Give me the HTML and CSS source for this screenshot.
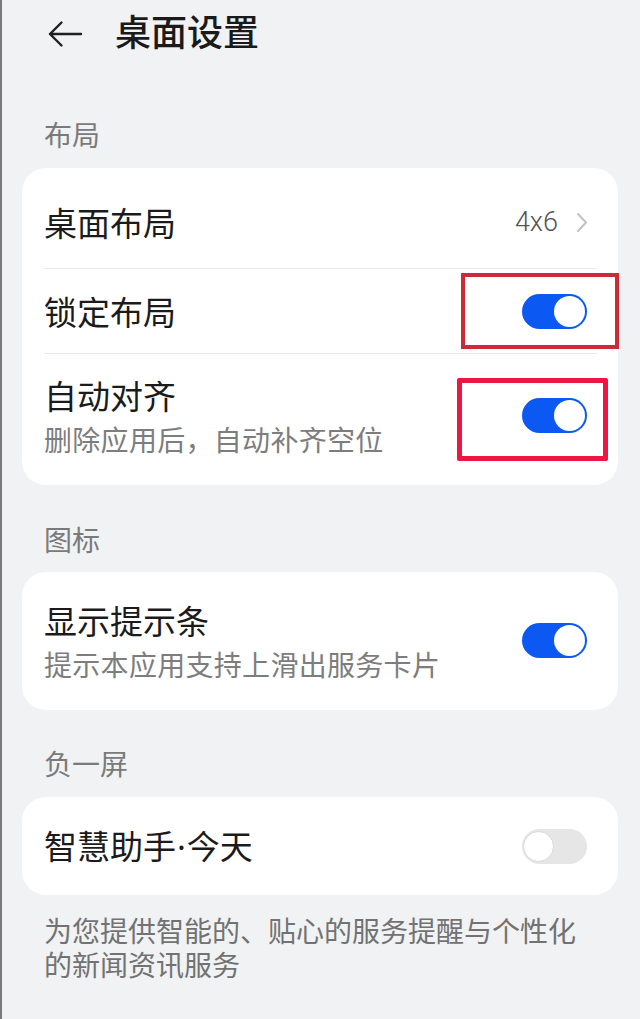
FILE: index.html
```html
<!DOCTYPE html>
<html lang="zh-CN">
<head>
<meta charset="utf-8">
<title>桌面设置</title>
<link rel="stylesheet" href="styles.css">
</head>
<body>
<div class="page">
  <header class="header">
    <svg class="back" width="36" height="28" viewBox="0 0 36 28" aria-hidden="true">
      <path d="M34 14H3M14.5 2.5L3 14l11.5 11.5" fill="none" stroke="#1f1f1f" stroke-width="2.4" stroke-linecap="round" stroke-linejoin="round"/>
    </svg>
    <h1 class="title">桌面设置</h1>
  </header>

  <div class="section-label label-first">布局</div>
  <div class="card">
    <div class="row row-first">
      <span class="row-title">桌面布局</span>
      <span class="value">4x6</span>
      <svg class="chevron" width="12" height="21" viewBox="0 0 12 21" aria-hidden="true">
        <path d="M2 2l8 8.5L2 19" fill="none" stroke="#c2c2c2" stroke-width="2" stroke-linecap="round" stroke-linejoin="round"/>
      </svg>
    </div>
    <div class="divider"></div>
    <div class="row row-mid">
      <span class="row-title">锁定布局</span>
      <span class="toggle on"><span class="knob"></span></span>
    </div>
    <div class="divider"></div>
    <div class="row row-two row-last">
      <div class="texts">
        <div class="row-title">自动对齐</div>
        <div class="row-sub">删除应用后，自动补齐空位</div>
      </div>
      <span class="toggle on"><span class="knob"></span></span>
    </div>
  </div>

  <div class="section-label">图标</div>
  <div class="card">
    <div class="row row-two row-solo">
      <div class="texts">
        <div class="row-title">显示提示条</div>
        <div class="row-sub">提示本应用支持上滑出服务卡片</div>
      </div>
      <span class="toggle on"><span class="knob"></span></span>
    </div>
  </div>

  <div class="section-label label-third">负一屏</div>
  <div class="card">
    <div class="row row-single">
      <span class="row-title">智慧助手<span class="dot">·</span>今天</span>
      <span class="toggle off"><span class="knob"></span></span>
    </div>
  </div>

  <p class="footnote">为您提供智能的、贴心的服务提醒与个性化的新闻资讯服务</p>

  <div class="mark mark-a"></div>
  <div class="mark mark-b"></div>
</div>
</body>
</html>
```

FILE: styles.css
```css
* { box-sizing: border-box; }

html, body {
  margin: 0;
  padding: 0;
  background: #f1f2f4;
}

body {
  font-family: "Noto Sans CJK SC", "Noto Sans", sans-serif;
  color: #1b1b1b;
}

.page {
  position: relative;
  width: 640px;
  min-height: 1019px;
  border-left: 2px solid #7a7a7a;
  padding: 0 22px 0 20px;
  background: #f1f2f4;
}

.header {
  height: 68px;
  display: flex;
  align-items: center;
  padding-left: 25px;
}

.back {
  display: block;
  margin-top: 0;
}

.title {
  margin: 0 0 8px 32px;
  font-size: 36px;
  font-weight: 500;
  line-height: 44px;
  color: #1a1a1a;
}

.section-label {
  margin: 34px 0 13px 22px;
  font-size: 28px;
  line-height: 40px;
  color: #7a7a7a;
}

.label-first { margin-top: 46px; margin-bottom: 14px; }
.label-third { margin-top: 33px; margin-bottom: 14px; }

.card {
  background: #ffffff;
  border-radius: 24px;
  padding: 0 22px;
}

.row {
  display: flex;
  align-items: center;
}

.row-first { height: 100px; padding-top: 8px; }
.row-mid { height: 84px; }
.row-last { padding: 19px 0 28px; }
.row-solo { padding: 26px 0 28px; }
.row-single { height: 98px; }

.texts { flex: 1; }

.row-title {
  flex: 1;
  font-size: 33px;
  line-height: 44px;
  color: #1b1b1b;
}

.dot {
  font-family: "Noto Sans", sans-serif;
  margin: 0 1px;
}

.row-sub {
  margin-top: 4px;
  font-size: 28px;
  line-height: 36px;
  letter-spacing: 0.3px;
  color: #7d7d7d;
}

.value {
  font-family: Roboto, "Noto Sans", sans-serif;
  font-size: 27px;
  font-weight: 300;
  color: #555555;
  margin-right: 18px;
}

.chevron {
  display: block;
  margin-right: 8px;
}

.divider {
  height: 1px;
  background: #e9e9eb;
  margin-right: -1px;
}

.toggle {
  position: relative;
  flex: none;
  width: 65px;
  height: 35px;
  border-radius: 18px;
  margin-right: 9px;
}

.toggle.on { background: #0b58f2; }
.toggle.off { background: #e6e6e6; }

.knob {
  position: absolute;
  top: 2px;
  width: 31px;
  height: 31px;
  border-radius: 50%;
  background: #ffffff;
}

.toggle.on .knob { right: 2px; }
.toggle.off .knob { left: 1px; border: 1px solid #d9d9d9; }

.footnote {
  margin: 18px 22px 0 22px;
  font-size: 28px;
  line-height: 34px;
  color: #727272;
}

.mark {
  position: absolute;
}

.mark-a {
  left: 459px;
  top: 273px;
  width: 158px;
  height: 76px;
  border: 4px solid #cd2a38;
}

.mark-b {
  left: 455px;
  top: 378px;
  width: 151px;
  height: 83px;
  border: 5px solid #ee1640;
  border-radius: 2px;
}
```
